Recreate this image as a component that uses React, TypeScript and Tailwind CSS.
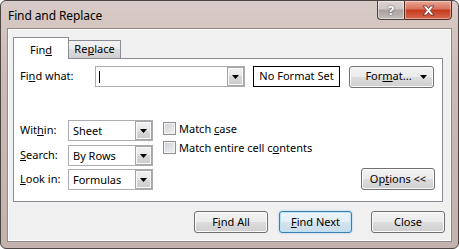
import React from "react";

const btnBase =
  "flex items-center justify-center h-[22px] rounded-[3px] border border-[#707070] bg-[linear-gradient(#f2f2f2,#ebebeb_50%,#dddddd_50%,#cfcfcf)] shadow-[inset_0_0_0_1px_#fbfbfb] text-[#000]";

function Arrow() {
  return (
    <svg width="7" height="4" viewBox="0 0 7 4">
      <path d="M0 0H7L3.5 4Z" fill="#000" />
    </svg>
  );
}

function DropBtn() {
  return (
    <div className="flex items-center justify-center w-[17px] h-[19px] border border-[#a5a5a5] bg-[linear-gradient(#f2f2f2,#e6e6e6_50%,#d8d8d8_50%,#cbcbcb)] shadow-[inset_0_0_0_1px_#fafafa]">
      <Arrow />
    </div>
  );
}

function Select({ value }: { value: string }) {
  return (
    <div className="flex items-center w-[85px] h-[21px] border border-[#abadb3] bg-white">
      <span className="flex-1 pl-[4px] leading-none">{value}</span>
      <DropBtn />
    </div>
  );
}

function Check({ children }: { children: React.ReactNode }) {
  return (
    <div className="flex items-center h-[15px]">
      <div className="w-[13px] h-[13px] border border-[#8e8f8f] bg-[linear-gradient(135deg,#cbcfd5,#f2f2f2)] shadow-[inset_0_0_0_1px_#f4f4f4]" />
      <span className="ml-[3px] leading-none">{children}</span>
    </div>
  );
}

export default function App() {
  return (
    <div className="w-[459px] h-[249px] font-['Noto_Sans',sans-serif] text-[11px] text-black">
      <div className="flex flex-col w-[459px] h-[249px] rounded-[6px] border border-[#4d4543] bg-[linear-gradient(180deg,#d9cbc7_0%,#cbbab5_30%,#c4b2ac_100%)] overflow-hidden">
        {/* title bar */}
        <div className="flex h-[27px]">
          <div className="pl-[7px] pt-[6px] text-[12px] tracking-[-0.1px] text-black leading-[18px]">
            Find and Replace
          </div>
          <div className="ml-auto mr-[6px] -mt-px flex h-[20px]">
            <div className="flex items-center justify-center w-[27px] h-[20px] rounded-bl-[4px] border border-[#4c4240] border-r-0 bg-[linear-gradient(#ddd4d1,#cfc6c3_45%,#a9a19e_50%,#c3bcb9)] shadow-[inset_0_0_0_1px_rgba(255,255,255,0.45)]">
              <span className="text-white font-bold text-[13px] leading-none [text-shadow:0_0_2px_#333]">?</span>
            </div>
            <div className="flex items-center justify-center w-[48px] h-[20px] rounded-br-[4px] border border-[#4c2a22] bg-[linear-gradient(#e8a898,#d8705a_45%,#c5391e_50%,#d5694f)] shadow-[inset_0_0_0_1px_rgba(255,230,220,0.5)]">
              <svg width="13" height="11" viewBox="0 0 13 11">
                <path
                  d="M1 1H4.5L6.5 3.6L8.5 1H12L8.3 5.5L12 10H8.5L6.5 7.4L4.5 10H1L4.7 5.5Z"
                  fill="#fff"
                  stroke="#5a2a20"
                  strokeWidth="0.8"
                  strokeLinejoin="round"
                />
              </svg>
            </div>
          </div>
        </div>
        {/* client area */}
        <div className="mx-[6px] h-[214px] border border-[#938884] bg-[#f0f0f0] shadow-[inset_0_0_0_1px_#fdfdfd] flex flex-col">
          {/* tabs */}
          <div className="flex items-end ml-[5px] mt-[8px] h-[21px]">
            <div className="relative z-10 -mb-px w-[56px] h-[22px] border border-b-0 border-[#898c95] bg-white flex items-start justify-center pt-[4px]">
              <span>
                Fin<u className="underline-offset-[1px]">d</u>
              </span>
            </div>
            <div className="-ml-px w-[53px] h-[18px] border border-b-0 border-[#898c95] bg-[linear-gradient(#f2f2f2,#ebebeb_50%,#dddddd_50%,#cfcfcf)] flex items-center justify-center">
              <span>
                Re<u className="underline-offset-[1px]">p</u>lace
              </span>
            </div>
          </div>
          {/* panel */}
          <div className="ml-[5px] w-[430px] h-[144px] border border-[#898c95] bg-white flex flex-col">
            <div className="flex items-center mt-[7px] pl-[6px] h-[21px]">
              <span className="w-[75px]">
                Fi<u className="underline-offset-[1px]">n</u>d what:
              </span>
              <div className="flex items-center w-[150px] h-[21px] border border-[#abadb3] bg-white">
                <div className="flex-1 flex items-center pl-[3px]">
                  <div className="w-px h-[12px] bg-black" />
                </div>
                <DropBtn />
              </div>
              <div className="ml-[8px] w-[87px] h-[21px] border border-black flex items-center justify-center">
                No Format Set
              </div>
              <div className={`${btnBase} ml-[9px] w-[85px] h-[21px] relative`}>
                <span className="ml-[-6px]">
                  For<u className="underline-offset-[1px]">m</u>at...
                </span>
                <span className="absolute right-[6px] top-[8px] flex">
                  <Arrow />
                </span>
              </div>
            </div>
            <div className="flex mt-[33px] pl-[6px] pr-[7px]">
              <div className="flex flex-col">
                <div className="flex items-center h-[21px]">
                  <span className="w-[48px]">
                    Wit<u className="underline-offset-[1px]">h</u>in:
                  </span>
                  <Select value="Sheet" />
                </div>
                <div className="flex items-center h-[21px] mt-[4px]">
                  <span className="w-[48px]">
                    <u className="underline-offset-[1px]">S</u>earch:
                  </span>
                  <Select value="By Rows" />
                </div>
                <div className="flex items-center h-[21px] mt-[3px]">
                  <span className="w-[48px]">
                    <u className="underline-offset-[1px]">L</u>ook in:
                  </span>
                  <Select value="Formulas" />
                </div>
              </div>
              <div className="flex flex-col ml-[10px] pt-[1px]">
                <Check>
                  Match <u className="underline-offset-[1px]">c</u>ase
                </Check>
                <div className="mt-[4px]">
                  <Check>
                    Match entire cell c<u className="underline-offset-[1px]">o</u>ntents
                  </Check>
                </div>
              </div>
              <div className="ml-auto self-end">
                <div className={`${btnBase} w-[74px]`}>
                  Op<u className="underline-offset-[1px]">t</u>ions &lt;&lt;
                </div>
              </div>
            </div>
          </div>
          {/* bottom buttons */}
          <div className="flex justify-end mt-[9px] pr-[6px]">
            <div className={`${btnBase} w-[74px]`}>
              <span>
                F<u className="underline-offset-[1px]">i</u>nd All
              </span>
            </div>
            <div className="ml-[11px] flex items-center justify-center w-[73px] h-[22px] rounded-[3px] border border-[#3c7fb1] bg-[linear-gradient(#eef5fa,#e3eef6_50%,#d3e4ef_50%,#c9dce9)] shadow-[inset_0_0_0_1px_#b9e0f5,0_0_2px_#86c1e4]">
              <span>
                <u className="underline-offset-[1px]">F</u>ind Next
              </span>
            </div>
            <div className={`${btnBase} ml-[19px] w-[74px]`}>Close</div>
          </div>
        </div>
      </div>
    </div>
  );
}
